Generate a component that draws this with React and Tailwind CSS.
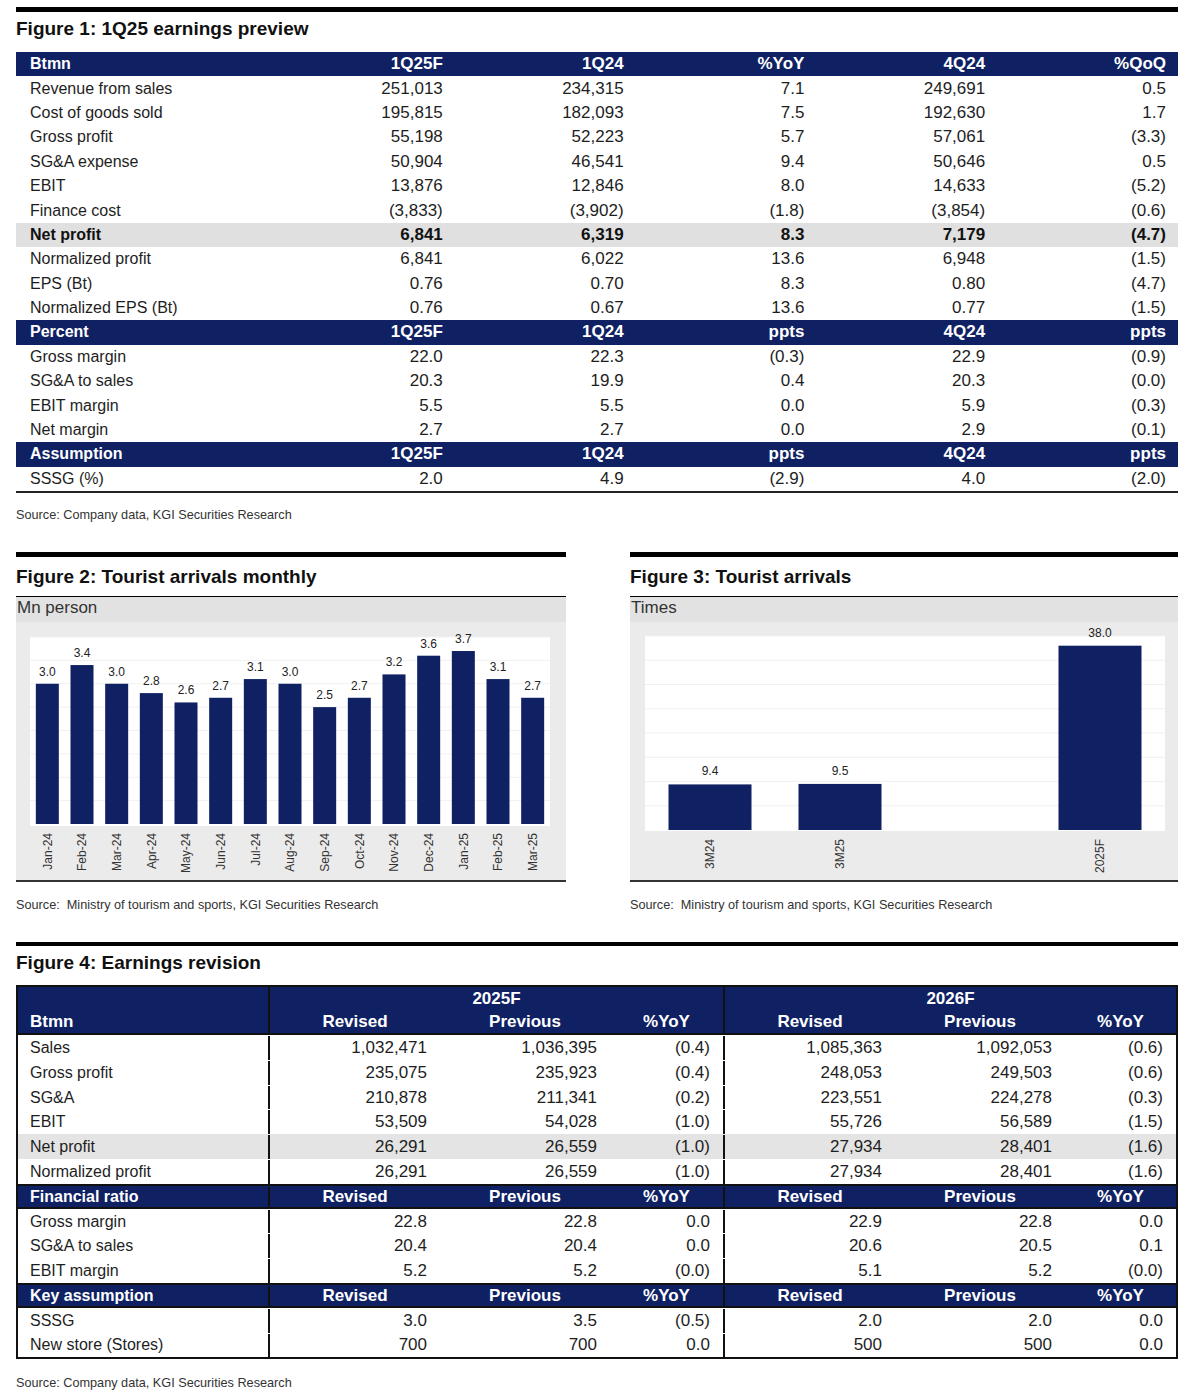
import React from "react";

const NAVY = "#0f2163";

const fig1Rows = [
  { t: "h", c: ["Btmn", "1Q25F", "1Q24", "%YoY", "4Q24", "%QoQ"] },
  { c: ["Revenue from sales", "251,013", "234,315", "7.1", "249,691", "0.5"] },
  { c: ["Cost of goods sold", "195,815", "182,093", "7.5", "192,630", "1.7"] },
  { c: ["Gross profit", "55,198", "52,223", "5.7", "57,061", "(3.3)"] },
  { c: ["SG&A expense", "50,904", "46,541", "9.4", "50,646", "0.5"] },
  { c: ["EBIT", "13,876", "12,846", "8.0", "14,633", "(5.2)"] },
  { c: ["Finance cost", "(3,833)", "(3,902)", "(1.8)", "(3,854)", "(0.6)"] },
  { t: "g", c: ["Net profit", "6,841", "6,319", "8.3", "7,179", "(4.7)"] },
  { c: ["Normalized profit", "6,841", "6,022", "13.6", "6,948", "(1.5)"] },
  { c: ["EPS (Bt)", "0.76", "0.70", "8.3", "0.80", "(4.7)"] },
  { c: ["Normalized EPS (Bt)", "0.76", "0.67", "13.6", "0.77", "(1.5)"] },
  { t: "h", c: ["Percent", "1Q25F", "1Q24", "ppts", "4Q24", "ppts"] },
  { c: ["Gross margin", "22.0", "22.3", "(0.3)", "22.9", "(0.9)"] },
  { c: ["SG&A to sales", "20.3", "19.9", "0.4", "20.3", "(0.0)"] },
  { c: ["EBIT margin", "5.5", "5.5", "0.0", "5.9", "(0.3)"] },
  { c: ["Net margin", "2.7", "2.7", "0.0", "2.9", "(0.1)"] },
  { t: "h", c: ["Assumption", "1Q25F", "1Q24", "ppts", "4Q24", "ppts"] },
  { c: ["SSSG (%)", "2.0", "4.9", "(2.9)", "4.0", "(2.0)"] },
];

const monthly = [
  ["Jan-24", 3.0], ["Feb-24", 3.4], ["Mar-24", 3.0], ["Apr-24", 2.8],
  ["May-24", 2.6], ["Jun-24", 2.7], ["Jul-24", 3.1], ["Aug-24", 3.0],
  ["Sep-24", 2.5], ["Oct-24", 2.7], ["Nov-24", 3.2], ["Dec-24", 3.6],
  ["Jan-25", 3.7], ["Feb-25", 3.1], ["Mar-25", 2.7],
];

const yearly = [["3M24", 9.4], ["3M25", 9.5], null, ["2025F", 38.0]];

const subHead = ["Revised", "Previous", "%YoY", "Revised", "Previous", "%YoY"];

const fig4Rows = [
  { c: ["Sales", "1,032,471", "1,036,395", "(0.4)", "1,085,363", "1,092,053", "(0.6)"] },
  { c: ["Gross profit", "235,075", "235,923", "(0.4)", "248,053", "249,503", "(0.6)"] },
  { c: ["SG&A", "210,878", "211,341", "(0.2)", "223,551", "224,278", "(0.3)"] },
  { c: ["EBIT", "53,509", "54,028", "(1.0)", "55,726", "56,589", "(1.5)"] },
  { t: "g", c: ["Net profit", "26,291", "26,559", "(1.0)", "27,934", "28,401", "(1.6)"] },
  { c: ["Normalized profit", "26,291", "26,559", "(1.0)", "27,934", "28,401", "(1.6)"] },
  { t: "h", c: ["Financial ratio", ...subHead] },
  { c: ["Gross margin", "22.8", "22.8", "0.0", "22.9", "22.8", "0.0"] },
  { c: ["SG&A to sales", "20.4", "20.4", "0.0", "20.6", "20.5", "0.1"] },
  { c: ["EBIT margin", "5.2", "5.2", "(0.0)", "5.1", "5.2", "(0.0)"] },
  { t: "h", c: ["Key assumption", ...subHead] },
  { c: ["SSSG", "3.0", "3.5", "(0.5)", "2.0", "2.0", "0.0"] },
  { c: ["New store (Stores)", "700", "700", "0.0", "500", "500", "0.0"] },
];

const w4 = [
  "w-[250px]",
  "w-[172px] border-l-2 border-[#111]",
  "w-[170px]",
  "w-[113px]",
  "w-[172px] border-l-2 border-[#111]",
  "w-[170px]",
  "w-[111px]",
];

const FigTitle = ({ children, bar = "h-[5px]" }) => (
  <>
    <div className={`${bar} bg-black`} />
    <div className="font-bold text-[19px] leading-[24px] text-[#111]">{children}</div>
  </>
);

const Source = ({ children, className = "" }) => (
  <div className={`text-[12.7px] leading-[16px] text-[#333] ${className}`}>{children}</div>
);

const Fig1Row = ({ row }) => {
  const head = row.t === "h";
  const gray = row.t === "g";
  return (
    <div
      className={`grid grid-cols-[258px_repeat(5,minmax(0,1fr))] h-[24.4px] items-center text-[17px] leading-[24px] ${
        head ? "text-white font-bold" : gray ? "bg-[#e0e0e0] font-bold text-[#111]" : "text-[#1e1e1e]"
      }`}
      style={head ? { backgroundColor: NAVY } : undefined}
    >
      {row.c.map((v, i) =>
        i === 0 ? (
          <div key={i} className="pl-[14px] whitespace-nowrap text-[16px]">{v}</div>
        ) : (
          <div key={i} className="text-right pr-3">{v}</div>
        )
      )}
    </div>
  );
};

const Fig4Row = ({ row }) => {
  const head = row.t === "h";
  const gray = row.t === "g";
  return (
    <div
      className={`flex h-[24.8px] text-[17px] leading-[22px] pt-px ${
        head ? "text-white font-bold border-y-2 border-[#111]" : gray ? "bg-[#e4e4e4] text-[#1e1e1e]" : "text-[#1e1e1e]"
      }`}
      style={head ? { backgroundColor: NAVY } : undefined}
    >
      {row.c.map((v, i) => (
        <div
          key={i}
          className={`${w4[i]} flex items-center ${
            i === 0 ? "pl-3 whitespace-nowrap text-[16px]" : head ? "justify-center" : "justify-end pr-[13px]"
          }`}
        >
          {v}
        </div>
      ))}
    </div>
  );
};

const MonthlyChart = () => {
  const plotX = 14, plotW = 520, base = 202, scale = 46.75;
  const slot = plotW / monthly.length;
  return (
    <svg width="550" height="258" className="block">
      <rect x="0" y="0" width="550" height="258" fill="#ebebeb" />
      <rect x={plotX} y="15" width={plotW} height={base - 15 + 2} fill="#fff" />
      {[0.5, 1, 1.5, 2, 2.5, 3, 3.5, 4].map((g) => (
        <line key={g} x1={plotX} x2={plotX + plotW} y1={base - g * scale} y2={base - g * scale} stroke="#f1f1f1" />
      ))}
      {monthly.map(([m, v], i) => {
        const cx = plotX + slot * (i + 0.5);
        const h = v * scale;
        return (
          <g key={m}>
            <rect x={cx - 11.5} y={base - h} width="23" height={h} fill={NAVY} />
            <text x={cx} y={base - h - 8} fontSize="12" textAnchor="middle" fill="#222">
              {v.toFixed(1)}
            </text>
            <text
              transform={`translate(${cx},${base + 9}) rotate(-90)`}
              dy="0.35em"
              fontSize="12"
              textAnchor="end"
              fill="#333"
            >
              {m}
            </text>
          </g>
        );
      })}
    </svg>
  );
};

const YearlyChart = () => {
  const plotX = 15, plotW = 520, base = 208, scale = 194 / 40;
  const slot = plotW / yearly.length;
  return (
    <svg width="548" height="258" className="block">
      <rect x="0" y="0" width="548" height="258" fill="#ebebeb" />
      <rect x={plotX} y="14" width={plotW} height={base - 14 + 1} fill="#fff" />
      {[5, 10, 15, 20, 25, 30, 35, 40].map((g) => (
        <line key={g} x1={plotX} x2={plotX + plotW} y1={base - g * scale} y2={base - g * scale} stroke="#f1f1f1" />
      ))}
      {yearly.map((d, i) => {
        if (!d) return null;
        const [m, v] = d;
        const cx = plotX + slot * (i + 0.5);
        const h = v * scale;
        return (
          <g key={m}>
            <rect x={cx - 41.5} y={base - h} width="83" height={h} fill={NAVY} />
            <text x={cx} y={base - h - 9} fontSize="12" textAnchor="middle" fill="#222">
              {v.toFixed(1)}
            </text>
            <text
              transform={`translate(${cx},${base + 9}) rotate(-90)`}
              dy="0.35em"
              fontSize="12"
              textAnchor="end"
              fill="#333"
            >
              {m}
            </text>
          </g>
        );
      })}
    </svg>
  );
};

const ChartBox = ({ title, unit, width, children }) => (
  <div className={width}>
    <FigTitle>{title}</FigTitle>
    <div className="h-px bg-black mt-[7px]" />
    <div className="bg-[#e2e2e2] border-b-2 border-[#333]">
      <div className="h-[25px] pl-px text-[17px] leading-[22px] text-[#333]">{unit}</div>
      {children}
    </div>
  </div>
);

export default function App() {
  return (
    <div className="min-h-screen bg-white font-['Liberation_Sans',Arial,sans-serif]">
      <div className="ml-4 w-[1162px] pt-[7px] pb-[6px]">
        {/* Figure 1 */}
        <div className="[&>div:nth-child(2)]:mt-[5px] [&>div:nth-child(2)]:mb-[11px]">
          <FigTitle>Figure 1: 1Q25 earnings preview</FigTitle>
          <div>
            {fig1Rows.map((r, i) => (
              <Fig1Row key={i} row={r} />
            ))}
          </div>
        </div>
        <div className="h-[2px] bg-[#222]" />
        <Source className="mt-[14px]">Source: Company data, KGI Securities Research</Source>

        {/* Figures 2 and 3 */}
        <div className="flex justify-between mt-[29px] [&_.font-bold]:mt-[8px]">
          <ChartBox title="Figure 2: Tourist arrivals monthly" unit="Mn person" width="w-[550px]">
            <MonthlyChart />
          </ChartBox>
          <ChartBox title="Figure 3: Tourist arrivals" unit="Times" width="w-[548px]">
            <YearlyChart />
          </ChartBox>
        </div>
        <div className="flex justify-between mt-[15px]">
          <Source className="w-[550px]">Source:&nbsp; Ministry of tourism and sports, KGI Securities Research</Source>
          <Source className="w-[548px]">Source:&nbsp; Ministry of tourism and sports, KGI Securities Research</Source>
        </div>

        {/* Figure 4 */}
        <div className="mt-[29px] [&>div:nth-child(2)]:mt-[5px] [&>div:nth-child(2)]:mb-[10px]">
          <FigTitle bar="h-[4px]">Figure 4: Earnings revision</FigTitle>
          <div className="border-2 border-[#111]">
            <div className="text-white font-bold text-[17px] border-b-2 border-[#111]" style={{ backgroundColor: NAVY }}>
              <div className="flex h-[23px] leading-[24px]">
                <div className="w-[250px]" />
                <div className="w-[455px] border-l-2 border-[#111] text-center">2025F</div>
                <div className="w-[453px] border-l-2 border-[#111] text-center">2026F</div>
              </div>
              <div className="flex h-[23px] leading-[24px]">
                {["Btmn", ...subHead].map((v, i) => (
                  <div key={i} className={`${w4[i]} ${i === 0 ? "pl-3" : "text-center"}`}>
                    {v}
                  </div>
                ))}
              </div>
            </div>
            {fig4Rows.map((r, i) => (
              <Fig4Row key={i} row={r} />
            ))}
          </div>
          <Source className="mt-[16px]">Source: Company data, KGI Securities Research</Source>
        </div>
      </div>
    </div>
  );
}
